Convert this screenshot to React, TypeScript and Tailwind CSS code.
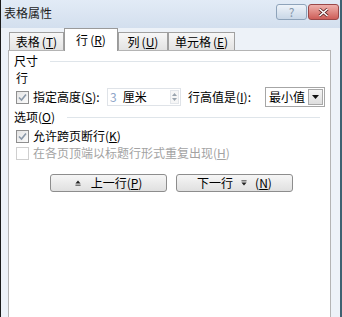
import React from "react";

function Check({ checked, disabled }: { checked?: boolean; disabled?: boolean }) {
  return (
    <span
      className={
        "grid h-[13px] w-[13px] shrink-0 place-items-center border " +
        (disabled ? "border-[#cfcfcf] bg-white" : "border-[#8f8f8f] bg-gradient-to-br from-[#e4e4e4] to-[#fbfbfb]")
      }
    >
      {checked && (
        <svg width="9" height="9" viewBox="0 0 9 9">
          <path d="M1 4.5 L3.5 7 L8 1.5" fill="none" stroke="#8a98a8" strokeWidth="1.6" />
        </svg>
      )}
    </span>
  );
}

function Tab({ label, hot, active }: { label: string; hot: string; active?: boolean }) {
  return (
    <div
      className={
        "flex items-center justify-center border border-b-0 text-[12px] leading-none " +
        (active
          ? "relative z-10 -mb-px h-[23px] border-[#9a9a9a] bg-white"
          : "h-[18px] border-[#a0a0a0] bg-gradient-to-b from-[#f7f7f7] to-[#e3e3e3]")
      }
    >
      {label}
      <span className="ml-[2px]">
        (<span className="underline">{hot}</span>)
      </span>
    </div>
  );
}

function Arrow({ down }: { down?: boolean }) {
  return (
    <svg width="6" height="6" viewBox="0 0 7 7">
      {down ? (
        <>
          <rect x="0.5" y="0.5" width="6" height="1" fill="#222" />
          <path d="M0.5 3 H6.5 L3.5 6.5 Z" fill="#222" />
        </>
      ) : (
        <>
          <path d="M3.5 0.5 L6.5 4 H0.5 Z" fill="#222" />
          <rect x="0.5" y="5.5" width="6" height="1" fill="#222" />
        </>
      )}
    </svg>
  );
}

export default function App() {
  return (
    <div className="flex h-[317px] w-[342px] flex-col overflow-hidden border-l border-r-2 border-l-[#1b1b1b] border-r-[#3e6171] bg-[#edf2f8] font-['Noto_Sans_CJK_SC',sans-serif] text-black">
      <div className="flex h-[28px] shrink-0 items-start justify-between bg-gradient-to-b from-[#e2ebf6] to-[#d3dfee]">
        <div className="pl-[3px] pt-[6px] text-[12px] leading-[14px] text-[#1c1c1c]">表格属性</div>
        <div className="mr-[1px] mt-[4px] flex gap-[1px]">
          <div className="grid h-[16px] w-[31px] place-items-center rounded-[3px] border border-[#8ea3ba] bg-gradient-to-b from-[#eef3f9] to-[#c9d7e7] text-[12px] leading-none text-[#8496ab]">
            ?
          </div>
          <div className="grid h-[16px] w-[31px] place-items-center rounded-[3px] border border-[#9a4848] bg-gradient-to-b from-[#eeb1ad] to-[#cd5d58]">
            <svg width="11" height="9" viewBox="0 0 11 9">
              <path d="M1.5 1 L9.5 8 M9.5 1 L1.5 8" stroke="#5a2424" strokeWidth="3" />
              <path d="M1.5 1 L9.5 8 M9.5 1 L1.5 8" stroke="#ffffff" strokeWidth="1.6" />
            </svg>
          </div>
        </div>
      </div>

      <div className="flex h-[22px] shrink-0 items-end pl-[8px]">
        <div className="w-[55px]">
          <Tab label="表格" hot="T" />
        </div>
        <div className="w-[54px]">
          <Tab label="行" hot="R" active />
        </div>
        <div className="w-[50px]">
          <Tab label="列" hot="U" />
        </div>
        <div className="w-[67px]">
          <Tab label="单元格" hot="E" />
        </div>
      </div>

      <div className="ml-[7px] mr-[9px] flex h-[290px] shrink-0 flex-col border border-[#b4b4b4] bg-white pl-[5px] pr-[4px] pt-[2px] text-[12px] leading-none">
        <div className="flex h-[16px] items-center pr-[6px]">
          <span>尺寸</span>
          <span className="ml-[12px] h-px flex-1 bg-[#dfe5ea]" />
        </div>
        <div className="flex h-[18px] items-center pl-[2px]">行</div>
        <div className="flex h-[20px] items-center pl-[2px]">
          <Check checked />
          <span className="ml-[4px] w-[67px] shrink-0">
            指定高度(<span className="underline">S</span>):
          </span>
          <div className="ml-[7px] flex h-[18px] w-[74px] shrink-0 items-center border border-[#dfe3e8] pl-[2px]">
            <span className="text-[#8fa6c8]">3</span>
            <span className="ml-[6px]">厘米</span>
            <span className="ml-auto mr-[1px] flex h-[14px] w-[9px] flex-col items-center justify-center gap-[2px] border border-[#e3e6ea] bg-[#f6f6f6]">
              <svg width="5" height="3" viewBox="0 0 5 3">
                <path d="M0 3 L2.5 0 L5 3 Z" fill="#9aa4ae" />
              </svg>
              <svg width="5" height="3" viewBox="0 0 5 3">
                <path d="M0 0 L2.5 3 L5 0 Z" fill="#9aa4ae" />
              </svg>
            </span>
          </div>
          <span className="ml-[7px] w-[71px] shrink-0">
            行高值是(<span className="underline">I</span>):
          </span>
          <div className="ml-[6px] flex h-[20px] w-[60px] shrink-0 items-center border border-[#a6a6a6] pl-[3px] pr-[1px]">
            <span>最小值</span>
            <span className="ml-auto grid h-[16px] w-[15px] place-items-center border border-[#a9a9a9] bg-gradient-to-b from-[#f5f5f5] to-[#dedede]">
              <svg width="7" height="4" viewBox="0 0 7 4">
                <path d="M0 0 H7 L3.5 4 Z" fill="#111" />
              </svg>
            </span>
          </div>
        </div>
        <div className="flex h-[20px] items-center pr-[6px]">
          <span>
            选项(<span className="underline">O</span>)
          </span>
          <span className="ml-[12px] h-px flex-1 bg-[#dfe5ea]" />
        </div>
        <div className="flex h-[18px] items-center pl-[2px]">
          <Check checked />
          <span className="ml-[4px]">
            允许跨页断行(<span className="underline">K</span>)
          </span>
        </div>
        <div className="flex h-[16px] items-center pl-[2px] text-[#a3a3a3]">
          <Check disabled />
          <span className="ml-[4px]">
            在各页顶端以标题行形式重复出现(<span className="underline">H</span>)
          </span>
        </div>
        <div className="mt-[13px] flex gap-[9px] pl-[36px]">
          <button className="flex h-[18px] w-[117px] items-center justify-center gap-[10px] rounded-[3px] border border-[#8d8d8d] bg-gradient-to-b from-[#f6f6f6] to-[#e0e0e0] text-[12px] leading-none">
            <Arrow />
            <span>
              上一行(<span className="underline">P</span>)
            </span>
          </button>
          <button className="flex h-[18px] w-[117px] items-center justify-center gap-[8px] rounded-[3px] border border-[#8d8d8d] bg-gradient-to-b from-[#f6f6f6] to-[#e0e0e0] text-[12px] leading-none">
            <span>下一行</span>
            <Arrow down />
            <span>
              (<span className="underline">N</span>)
            </span>
          </button>
        </div>
      </div>
    </div>
  );
}
